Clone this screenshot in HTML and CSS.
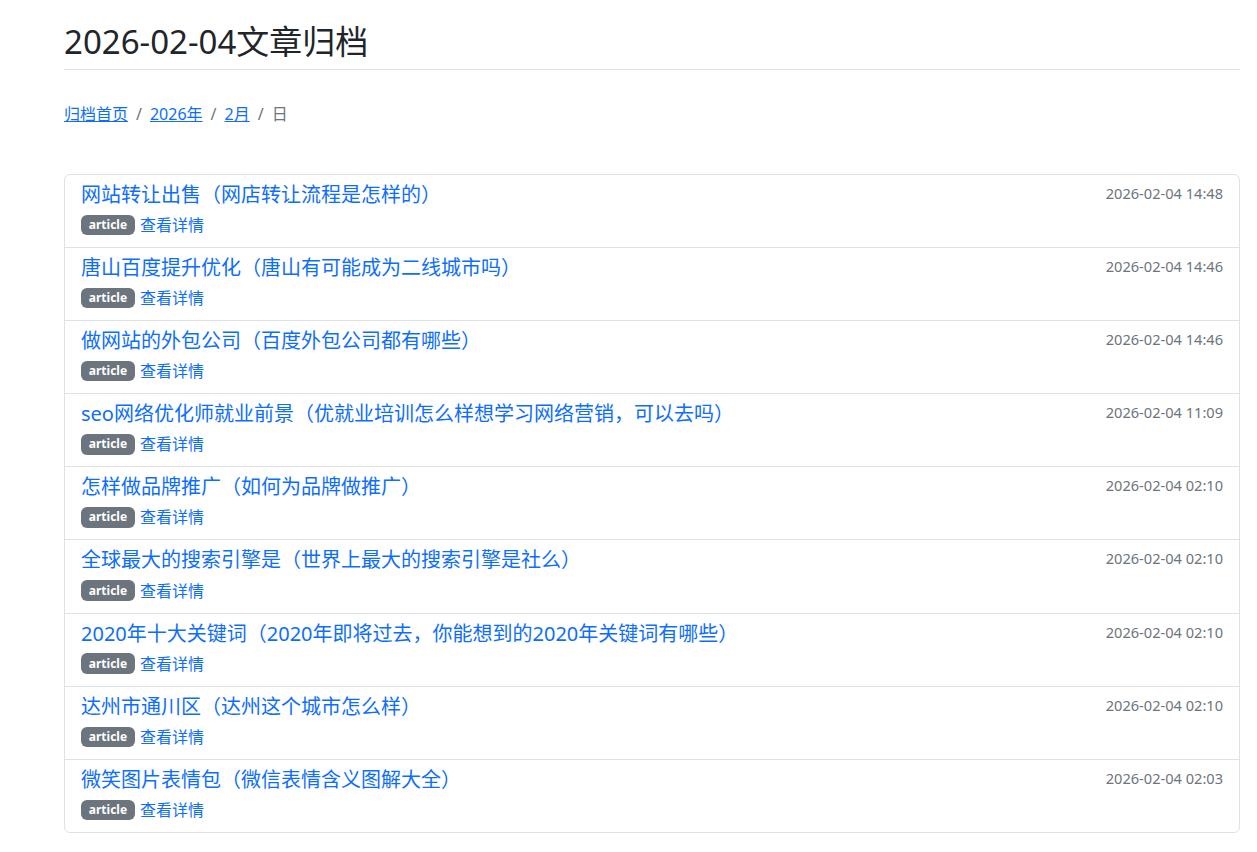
FILE: index.html
```html
<!DOCTYPE html>
<html lang="zh-CN">
<head>
<meta charset="utf-8">
<title>2026-02-04文章归档</title>
<link rel="stylesheet" href="styles.css">
</head>
<body>
<div class="page">
  <h1 class="page-title">2026-02-04文章归档</h1>
  <nav class="crumbs">
    <a href="#">归档首页</a><span class="sep">/</span><a href="#">2026年</a><span class="sep">/</span><a href="#">2月</a><span class="sep">/</span><span class="cur">日</span>
  </nav>
  <ul class="list">
    <li class="item"><div class="main"><a class="title" href="#">网站转让出售（网店转让流程是怎样的）</a><div class="meta"><span class="badge">article</span><a class="more" href="#">查看详情</a></div></div><span class="date">2026-02-04 14:48</span></li>
    <li class="item"><div class="main"><a class="title" href="#">唐山百度提升优化（唐山有可能成为二线城市吗）</a><div class="meta"><span class="badge">article</span><a class="more" href="#">查看详情</a></div></div><span class="date">2026-02-04 14:46</span></li>
    <li class="item"><div class="main"><a class="title" href="#">做网站的外包公司（百度外包公司都有哪些）</a><div class="meta"><span class="badge">article</span><a class="more" href="#">查看详情</a></div></div><span class="date">2026-02-04 14:46</span></li>
    <li class="item"><div class="main"><a class="title" href="#">seo网络优化师就业前景（优就业培训怎么样想学习网络营销，可以去吗）</a><div class="meta"><span class="badge">article</span><a class="more" href="#">查看详情</a></div></div><span class="date">2026-02-04 11:09</span></li>
    <li class="item"><div class="main"><a class="title" href="#">怎样做品牌推广（如何为品牌做推广）</a><div class="meta"><span class="badge">article</span><a class="more" href="#">查看详情</a></div></div><span class="date">2026-02-04 02:10</span></li>
    <li class="item"><div class="main"><a class="title" href="#">全球最大的搜索引擎是（世界上最大的搜索引擎是社么）</a><div class="meta"><span class="badge">article</span><a class="more" href="#">查看详情</a></div></div><span class="date">2026-02-04 02:10</span></li>
    <li class="item"><div class="main"><a class="title" href="#">2020年十大关键词（2020年即将过去，你能想到的2020年关键词有哪些）</a><div class="meta"><span class="badge">article</span><a class="more" href="#">查看详情</a></div></div><span class="date">2026-02-04 02:10</span></li>
    <li class="item"><div class="main"><a class="title" href="#">达州市通川区（达州这个城市怎么样）</a><div class="meta"><span class="badge">article</span><a class="more" href="#">查看详情</a></div></div><span class="date">2026-02-04 02:10</span></li>
    <li class="item"><div class="main"><a class="title" href="#">微笑图片表情包（微信表情含义图解大全）</a><div class="meta"><span class="badge">article</span><a class="more" href="#">查看详情</a></div></div><span class="date">2026-02-04 02:03</span></li>
  </ul>
</div>
</body>
</html>
```

FILE: styles.css
```css
html, body {
  margin: 0;
  padding: 0;
  background: #fff;
}
body {
  font-family: "Noto Sans", "Noto Sans CJK SC", sans-serif;
  font-size: 16px;
  line-height: 1.5;
  color: #212529;
}
.page {
  margin: 0 17px 0 64px;
  padding-top: 22px;
  padding-bottom: 20px;
}
.page-title {
  margin: 0;
  font-size: 33px;
  font-weight: 400;
  line-height: 40px;
  padding-bottom: 7px;
  border-bottom: 1px solid #dee2e6;
  color: #212529;
}
.crumbs {
  margin-top: 32px;
  line-height: 24px;
  font-size: 16px;
}
.crumbs a {
  color: #0d6efd;
  text-decoration: underline;
}
.crumbs .sep {
  color: #6c757d;
  padding: 0 8px;
}
.crumbs .cur {
  color: #6c757d;
}
.list {
  list-style: none;
  margin: 48px 0 0 0;
  padding: 0;
  border: 1px solid #dee2e6;
  border-radius: 6px;
}
.item {
  display: flex;
  justify-content: space-between;
  align-items: flex-start;
  padding: 8px 16px;
  border-top: 1px solid #dee2e6;
}
.item:first-child {
  border-top: 0;
}
.main {
  display: flex;
  flex-direction: column;
}
.title {
  font-size: 20px;
  line-height: 24px;
  color: #0d6efd;
  text-decoration: none;
}
.meta {
  display: flex;
  align-items: center;
  margin-top: 4px;
  height: 28.1px;
}
.badge {
  display: inline-block;
  background: #6c757d;
  color: #fff;
  font-size: 12px;
  font-weight: 700;
  line-height: 1;
  padding: 4.2px 7.8px;
  border-radius: 6px;
  margin-right: 5px;
}
.more {
  color: #0d6efd;
  text-decoration: none;
  font-size: 16px;
}
.date {
  font-size: 14.6px;
  line-height: 18px;
  color: #6c757d;
  white-space: nowrap;
  margin-top: 1px;
}
```
